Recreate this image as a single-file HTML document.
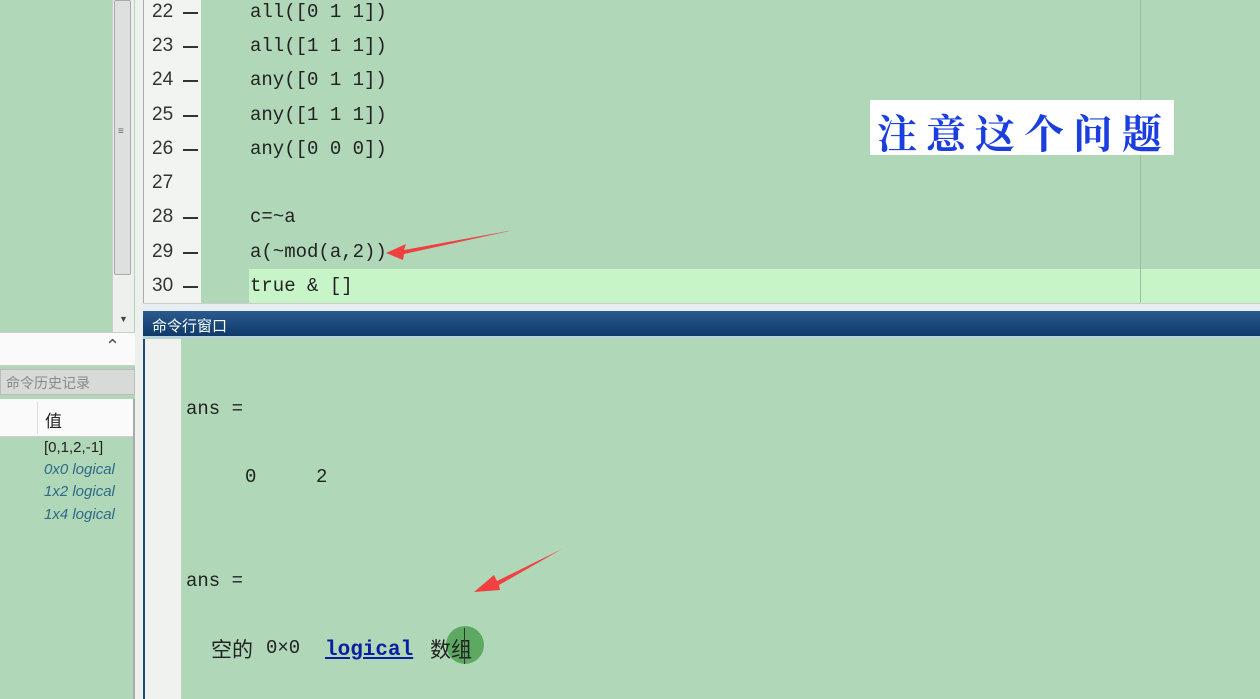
<!DOCTYPE html>
<html><head><meta charset="utf-8"><style>
body{margin:0;width:1260px;height:699px;overflow:hidden;background:#b0d7b8;position:relative;font-family:"Liberation Sans","Noto Sans CJK SC",sans-serif}
div{position:absolute;box-sizing:border-box;white-space:nowrap}
.mono{left:0;top:0;width:1260px;height:699px;font-family:"Liberation Mono","Noto Sans CJK SC",monospace;font-size:19px;color:#222;white-space:pre}
.mono span{white-space:pre}
.ln{position:absolute;left:152px;font-family:"Liberation Sans",sans-serif;font-size:19px;color:#333}
.dash{position:absolute;left:183px;width:15px;height:2px;background:#333}
.code{position:absolute;left:250px}
</style></head><body>
<!-- left panel -->
<div style="left:0;top:0;width:135px;height:332px;background:#b0d7b8"></div>
<div style="left:112px;top:0;width:22px;height:332px;background:#eef0ee;border-left:1px solid #ccc"></div>
<div style="left:114px;top:0;width:17px;height:275px;background:#dde0de;border:1px solid #aaa;border-radius:2px"></div>
<div style="left:118px;top:126px;font-size:10px;color:#666">≡</div>
<div style="left:119px;top:314px;font-size:9px;color:#444">▼</div>
<div style="left:0;top:332px;width:135px;height:34px;background:#fafafa;border-top:1px solid #ccc;border-bottom:1px solid #ccc"></div>
<div style="left:105px;top:336px;font-size:18px;color:#555">⌃</div>
<div style="left:0;top:369px;width:135px;height:26px;background:#d8dad8;border:1px solid #bbb"></div>
<div style="left:6px;top:373px;font-size:14px;color:#888">命令历史记录</div>
<div style="left:0;top:399px;width:135px;height:38px;background:#fafafa;border-bottom:1px solid #ccc"></div>
<div style="left:37px;top:402px;width:1px;height:32px;background:#ddd"></div>
<div style="left:45px;top:407px;font-size:17px;color:#222">值</div>
<div style="left:133px;top:399px;width:2px;height:300px;background:#aaa"></div>
<div style="left:44px;top:439px;font-size:15px;color:#222">[0,1,2,-1]</div>
<div style="left:44px;top:461px;font-size:15px;color:#2d6a8a;font-style:italic">0x0 logical</div>
<div style="left:44px;top:483px;font-size:15px;color:#2d6a8a;font-style:italic">1x2 logical</div>
<div style="left:44px;top:506px;font-size:15px;color:#2d6a8a;font-style:italic">1x4 logical</div>
<!-- editor -->
<div style="left:135px;top:0;width:8px;height:699px;background:#eef0ee"></div>
<div style="left:143px;top:0;width:1117px;height:304px;background:#b0d7b8;border-left:1px solid #aaa"></div>
<div style="left:144px;top:0;width:57px;height:304px;background:#f2f4f2"></div>
<div style="left:249px;top:269px;width:1011px;height:34px;background:#c8f5c8"></div>
<div style="left:1140px;top:0;width:1px;height:304px;background:#9cbca4"></div>
<div style="left:143px;top:303px;width:1117px;height:8px;background:#e8eef2;border-top:1px solid #ccc"></div>
<div class="mono">
<span class="ln" style="top:1px">22</span><span class="dash" style="top:12px"></span><span class="code" style="top:1px">all([0 1 1])</span>
<span class="ln" style="top:35px">23</span><span class="dash" style="top:46px"></span><span class="code" style="top:35px">all([1 1 1])</span>
<span class="ln" style="top:69px">24</span><span class="dash" style="top:80px"></span><span class="code" style="top:69px">any([0 1 1])</span>
<span class="ln" style="top:104px">25</span><span class="dash" style="top:115px"></span><span class="code" style="top:104px">any([1 1 1])</span>
<span class="ln" style="top:138px">26</span><span class="dash" style="top:149px"></span><span class="code" style="top:138px">any([0 0 0])</span>
<span class="ln" style="top:172px">27</span>
<span class="ln" style="top:206px">28</span><span class="dash" style="top:217px"></span><span class="code" style="top:206px">c=~a</span>
<span class="ln" style="top:241px">29</span><span class="dash" style="top:252px"></span><span class="code" style="top:241px">a(~mod(a,2))</span>
<span class="ln" style="top:275px">30</span><span class="dash" style="top:286px"></span><span class="code" style="top:275px">true &amp; []</span>
</div>
<div style="left:870px;top:100px;width:304px;height:55px;background:#fff"></div>
<div style="left:877px;top:103px;font-family:'Noto Serif CJK SC',serif;font-size:40px;font-weight:bold;color:#1a3ee0;letter-spacing:9px">注意这个问题</div>
<!-- command window -->
<div style="left:143px;top:311px;width:1117px;height:27px;background:linear-gradient(#2a5a8e,#0f3a6a);border-bottom:2px solid #b8d0e0"></div>
<div style="left:152px;top:315px;font-size:15px;color:#fff">命令行窗口</div>
<div style="left:143px;top:339px;width:1117px;height:360px;background:#b0d7b8;border-left:2px solid #1e4a7a"></div>
<div style="left:145px;top:339px;width:36px;height:360px;background:#f0f2f0"></div>
<div style="left:446px;top:626px;width:38px;height:38px;border-radius:50%;background:rgba(60,150,60,0.7)"></div>
<div class="mono">
<span style="position:absolute;left:186px;top:398px">ans =</span>
<span style="position:absolute;left:245px;top:466px">0</span>
<span style="position:absolute;left:316px;top:466px">2</span>
<span style="position:absolute;left:186px;top:570px">ans =</span>
<span style="position:absolute;left:211px;top:634px;font-size:21px">空的</span>
<span style="position:absolute;left:266px;top:637px">0×0</span>
<span style="position:absolute;left:325px;top:639px;font-size:21px;font-weight:bold;color:#0a1ea0;text-decoration:underline">logical</span>
<span style="position:absolute;left:430px;top:634px;font-size:21px">数组</span>
</div>
<div style="left:464px;top:628px;width:1px;height:36px;background:#333"></div>
<!-- arrows -->
<svg width="1260" height="699" style="position:absolute;left:0;top:0">
<polygon points="514,230 404,250 406,244 386,253 403,260 404,254" fill="#f04040"/>
<polygon points="562,549 497,581 494,575 474,592 500,590 499,585" fill="#f04040"/>
</svg>
</body></html>
